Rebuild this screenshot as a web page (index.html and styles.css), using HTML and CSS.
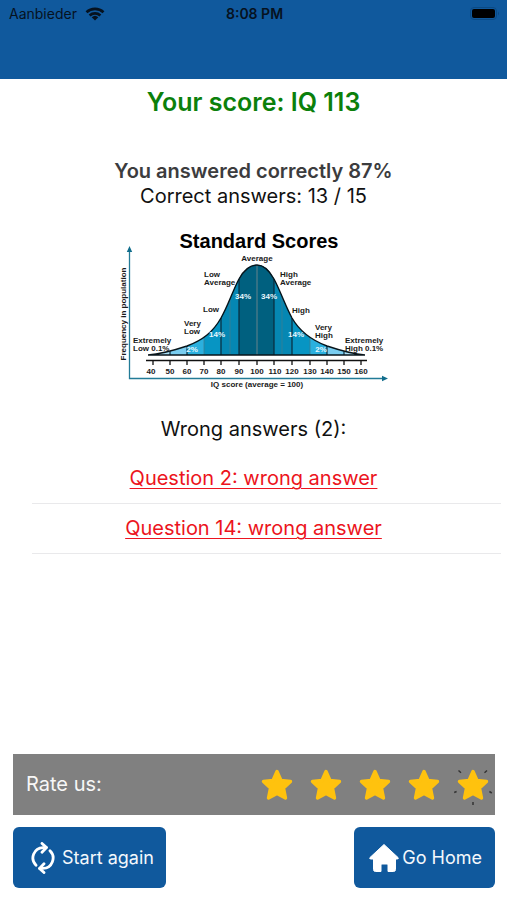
FILE: index.html
```
<!DOCTYPE html>
<html lang="en">
<head>
<meta charset="utf-8">
<meta name="viewport" content="width=device-width, initial-scale=1">
<title>Your score</title>
<link rel="stylesheet" href="styles.css">
</head>
<body>
<header class="topbar">
  <div class="status">
    <div class="carrier">
      <span>Aanbieder</span>
      <svg class="wifi" viewBox="0 0 20 14" aria-hidden="true">
        <path d="M1.5 5.2a12.5 12.5 0 0 1 17 0M4.6 8.4a8 8 0 0 1 10.8 0" fill="none" stroke="#06121f" stroke-width="2.7"/>
        <path d="M10 13.6 6.7 10.3a4.8 4.8 0 0 1 6.6 0z" fill="#06121f"/>
      </svg>
    </div>
    <time class="clock">8:08 PM</time>
    <svg class="battery" viewBox="0 0 30 14" aria-hidden="true">
      <rect x="0.5" y="0.5" width="26" height="12" rx="3.5" fill="none" stroke="#0b4a84"/>
      <rect x="2" y="2" width="23" height="9" rx="2" fill="#000"/>
      <path d="M28 4.5q2 2 0 4z" fill="#0b4a84"/>
    </svg>
  </div>
</header>

<main class="results">
  <h1 class="score">Your score: IQ 113</h1>
  <p class="percent">You answered correctly 87%</p>
  <p class="count">Correct answers: 13 / 15</p>

  <svg class="chart" viewBox="0 0 277 164" role="img" aria-label="Standard Scores">
    <defs>
      <clipPath id="bell">
        <path d="M33 127C48 126 60 122 72 118C88 112 98 104 106 90C113 78 118 62 124 51C129 42 135 37 142 37C149 37 154 42 159 51C165 62 170 77 177 90C185 104 196 112 212 118C224 122 236 126 250 127z"/>
      </clipPath>
    </defs>
    <g clip-path="url(#bell)">
      <rect x="33" y="30" width="217" height="98" fill="#a9def5"/>
      <rect x="55" y="30" width="174" height="98" fill="#79cdf0"/>
      <rect x="72" y="30" width="140" height="98" fill="#2bb0de"/>
      <rect x="89" y="30" width="106" height="98" fill="#0795c3"/>
      <rect x="106" y="30" width="71" height="98" fill="#0587b3"/>
      <rect x="124" y="30" width="35" height="98" fill="#00607f"/>
      <path d="M55 30v98M72 30v98M106 30v98M124 30v98M159 30v98M177 30v98M212 30v98M229 30v98" stroke="#092b3b" stroke-width="1.2"/>
      <path d="M89 30v98M195 30v98M115 30v98M167 30v98" stroke="#3b7f93" stroke-width="0.8"/>
      <path d="M142 30v98" stroke="#66838c"/>
    </g>
    <path d="M33 127C48 126 60 122 72 118C88 112 98 104 106 90C113 78 118 62 124 51C129 42 135 37 142 37C149 37 154 42 159 51C165 62 170 77 177 90C185 104 196 112 212 118C224 122 236 126 250 127z" fill="none" stroke="#08151b" stroke-width="1.4"/>
    <path d="M31 132.500H252M38 132v5M55 132v5M72 132v5M89 132v5M106 132v5M124 132v5M142 132v5M159 132v5M177 132v5M195 132v5M212 132v5M229 132v5M246 132v5" fill="none" stroke="#111" stroke-width="1.3"/>
    <path d="M14.500 22V150.500H269" fill="none" stroke="#227b97" stroke-width="1.3"/>
    <path d="M14.500 18l2.700 6h-5.400zM273 150.500l-6-2.700v5.400z" fill="#116d8c"/>
    <text class="chart-title" x="144" y="20">Standard Scores</text>
    <g class="chart-label">
      <text x="142" y="33" text-anchor="middle">Average</text>
      <text x="89" y="49">Low</text><text x="89" y="57">Average</text>
      <text x="165" y="49">High</text><text x="165" y="57">Average</text>
      <text x="88" y="84">Low</text><text x="177" y="85">High</text>
      <text x="69" y="98">Very</text><text x="69" y="106">Low</text>
      <text x="200" y="102">Very</text><text x="200" y="110">High</text>
      <text x="18" y="115">Extremely</text><text x="18" y="123">Low 0.1%</text>
      <text x="230" y="115">Extremely</text><text x="230" y="123">High 0.1%</text>
      <text x="142" y="159" text-anchor="middle">IQ score (average = 100)</text>
      <text transform="translate(11 86) rotate(-90)" text-anchor="middle">Frequency in population</text>
    </g>
    <g class="chart-label" text-anchor="middle">
      <text x="36" y="146">40</text><text x="55" y="146">50</text><text x="72" y="146">60</text>
      <text x="89" y="146">70</text><text x="106" y="146">80</text><text x="124" y="146">90</text>
      <text x="142" y="146">100</text><text x="160" y="146">110</text><text x="177" y="146">120</text>
      <text x="195" y="146">130</text><text x="212" y="146">140</text><text x="229" y="146">150</text>
      <text x="246" y="146">160</text>
    </g>
    <g class="chart-label chart-share" text-anchor="middle">
      <text x="128" y="71">34%</text><text x="154" y="71">34%</text>
      <text x="102" y="109">14%</text><text x="181" y="109">14%</text>
      <text x="77" y="124">2%</text><text x="206" y="124">2%</text>
    </g>
  </svg>

  <h2 class="wrong-title">Wrong answers (2):</h2>
  <ul class="wrong-list">
    <li><a href="#question-2">Question 2: wrong answer</a></li>
    <li><a href="#question-14">Question 14: wrong answer</a></li>
  </ul>
</main>

<footer class="footer">
  <svg width="0" height="0" class="symbols" aria-hidden="true">
    <symbol id="star" viewBox="0 0 32 32">
      <path d="M16 2.500 20 11.500 29.500 12.500 22.500 19 24.500 29 16 24.500 7.500 29 9.500 19 2.500 12.500 12 11.500z" fill="#ffc20e" stroke="#ffc20e" stroke-width="3.400" stroke-linejoin="round"/>
    </symbol>
  </svg>
  <div class="rate">
    <span>Rate us:</span>
    <div class="stars">
      <button type="button" aria-label="1 star"><svg><use href="#star"/></svg></button>
      <button type="button" aria-label="2 stars"><svg><use href="#star"/></svg></button>
      <button type="button" aria-label="3 stars"><svg><use href="#star"/></svg></button>
      <button type="button" aria-label="4 stars"><svg><use href="#star"/></svg></button>
      <button type="button" aria-label="5 stars"><svg viewBox="0 0 32 32"><use href="#star" width="32" height="32"/><path d="M1.500 1.500l2.500 2.200M30 1.500l-2.500 2.200M-2.800 23.500l2.400-1M34.800 24l-2.400-1.500M16 33v3" stroke="#333" stroke-width="1.500" fill="none"/></svg></button>
    </div>
  </div>
  <div class="actions">
    <button type="button" class="action again">
      <svg class="again-icon" viewBox="0 0 24 32" fill="none" stroke="#fff" stroke-width="2.800" stroke-linecap="round" stroke-linejoin="round" aria-hidden="true">
        <path d="M5 23.200A10.300 10.300 0 0 1 12 5.600H15.200M19 8.800A10.300 10.300 0 0 1 12 26.400H8.800"/>
        <path d="M11 1.400 15.500 5.600 11 10.200M13 21.800 8.500 26.400 13 30.600"/>
      </svg>
      <span>Start again</span>
    </button>
    <button type="button" class="action home">
      <svg class="home-icon" viewBox="0 0 32 30" aria-hidden="true">
        <path d="M16 1.500 30 14.500q1 1.500-1 1.500H27.500V26.500q0 2-2 2H20V22q0-1-1-1H14q-1 0-1 1v6.500H7.500q-2 0-2-2V16H3q-2 0-1-1.500z" fill="#fff" stroke="#fff" stroke-linejoin="round"/>
      </svg>
      <span>Go Home</span>
    </button>
  </div>
</footer>
</body>
</html>
```
FILE: styles.css
```
* {
  box-sizing: border-box;
}

body {
  margin: 0;
  min-height: 100vh;
  display: flex;
  flex-direction: column;
  background: #fff;
  color: #111;
  font: 20px/25px Inter, "Liberation Sans", sans-serif;
}

h1, h2, p, ul {
  margin: 0;
  padding: 0;
}

.topbar {
  height: 79px;
  background: #10599d;
  color: #06121f;
}

.status {
  display: grid;
  grid-template-columns: 1fr auto 1fr;
  align-items: center;
  height: 28px;
  padding: 0 7px 0 9px;
  font-size: 14px;
  line-height: 20px;
}

.carrier {
  display: flex;
  align-items: center;
  gap: 8px;
}

.wifi {
  width: 20px;
  height: 14px;
}

.clock {
  font-size: 14px;
  font-weight: 600;
}

.battery {
  width: 30px;
  height: 14px;
  justify-self: end;
}

.results {
  display: flex;
  flex-direction: column;
  align-items: center;
  padding-top: 7px;
  text-align: center;
}

.score {
  margin-bottom: 41px;
  color: #0b800b;
  font-size: 25px;
  font-weight: 600;
  line-height: 32px;
}

.percent {
  color: #3c3c3e;
  font-weight: 600;
}

.chart {
  width: 277px;
  height: 164px;
  margin-top: 19px;
}

.chart-title {
  font: bold 20px "Liberation Sans", sans-serif;
  text-anchor: middle;
}

.chart-label {
  font: bold 8px "Liberation Sans", sans-serif;
  fill: #1a1a1a;
}

.chart-share {
  fill: #e8f7fd;
}

.wrong-title {
  margin-top: 25px;
  font-size: 20px;
  font-weight: 400;
}

.wrong-list {
  align-self: stretch;
  margin-top: 12px;
  padding: 0 6px 0 32px;
  list-style: none;
}

.wrong-list li {
  height: 50px;
  padding: 12px 26px 0 0;
  border-bottom: 1px solid #e9e9eb;
}

.wrong-list a {
  color: #ec1420;
  text-decoration-thickness: 1px;
  text-underline-offset: 3px;
}

.footer {
  margin-top: auto;
  padding: 0 12px 12px 13px;
}

.symbols {
  display: block;
}

.rate {
  display: flex;
  align-items: center;
  justify-content: space-between;
  height: 61px;
  margin-bottom: 12px;
  padding: 0 6px 0 13px;
  background: #808080;
  color: #f7f7f7;
}

.stars {
  display: flex;
  gap: 17px;
}

.stars button {
  width: 32px;
  height: 32px;
  padding: 0;
  border: 0;
  background: none;
}

.stars svg {
  display: block;
  width: 32px;
  height: 32px;
  overflow: visible;
}

.actions {
  display: flex;
  justify-content: space-between;
}

.action {
  display: flex;
  align-items: center;
  height: 61px;
  border: 0;
  border-radius: 6px;
  background: #10599d;
  color: #f4f8fc;
  font: 18px/24px Inter, "Liberation Sans", sans-serif;
}

.again {
  gap: 7px;
  padding: 0 12px 0 18px;
}

.home {
  gap: 2px;
  padding: 0 13px 0 14px;
}

.again-icon {
  width: 24px;
  height: 32px;
}

.home-icon {
  width: 32px;
  height: 30px;
}
```
